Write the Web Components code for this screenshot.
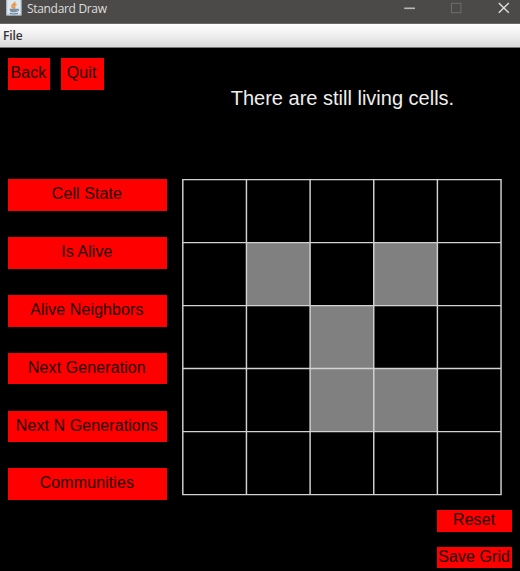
<!DOCTYPE html>
<html lang="en">
<head>
<meta charset="utf-8">
<title>Standard Draw</title>
<style>
html,body{margin:0;height:100%;background:#000;overflow:hidden}
</style>
</head>
<body>
<draw-window></draw-window>
<script>
class BaseElement extends HTMLElement {
  constructor() {
    super();
    this.attachShadow({ mode: 'open' }).innerHTML = this.view();
  }
}

customElements.define('title-bar', class extends BaseElement {
  view() {
    return `<style>
      :host{display:flex;box-sizing:border-box;height:24px;background:#4b4a48;border-bottom:1px solid #6c6b6a;color:#dedede;
        font:12px/17px "Open Sans","Noto Sans",sans-serif;padding-left:6px}
      .name{margin-left:5px;width:370.5px;letter-spacing:-.32px}
      svg{display:block;flex:none}
    </style>
    <svg width="16" height="16" viewBox="0 0 16 16">
      <rect x=".2" width="15.3" height="15.5" fill="#dfe7ee"/>
      <path d="M.7 0v15h14.4V0" fill="none" stroke="#92a7b9" stroke-width=".7"/>
      <path d="M8.7 1.8C9.6 4 5.3 4.6 6.1 6.6c.3.8 1 1.2 1.2 2M10.5 4.2C8.7 5 7.7 5.8 8.4 6.8c.4.5.5 1.1-.1 1.8" fill="none" stroke="#e59a4c" stroke-width="1.8"/>
      <path d="M3.6 8.8h7.6c-.1 1.9-.7 2.9-1.5 3.5H5.3C4.3 11.8 3.7 10.7 3.6 8.8z" fill="#7890a5"/>
      <path d="M11 9.3c2.6-.8 2.3 1.8-.6 2M3.5 13.3c2.5.8 6.2.8 8.5 0" fill="none" stroke="#55758f" stroke-width="1"/>
    </svg>
    <span class="name"><slot></slot></span>
    <svg width="122" height="18" viewBox="398 0 122 18">
      <path d="M404.2 8.3h10.8" stroke="#b8b8b7" stroke-width="1.6"/>
      <rect x="451.5" y="3.3" width="9.4" height="9.4" fill="none" stroke="#6e6d6b"/>
      <path d="M498.8 2.9l10 9.9M508.8 2.9l-10 9.9" stroke="#dededd" stroke-width="1.4"/>
    </svg>`;
  }
});

customElements.define('menu-bar', class extends BaseElement {
  view() {
    return `<style>
      :host{display:block;box-sizing:border-box;height:24px;padding-left:3px;border-bottom:1px solid #777;
        background:linear-gradient(#fff,#f0f0f0 45%,#dadada);color:#333;font:600 12px/23px "Open Sans","Noto Sans",sans-serif;letter-spacing:-.1px}
    </style><slot></slot>`;
  }
});

customElements.define('red-button', class extends BaseElement {
  view() {
    return `<style>
      :host{display:block;box-sizing:border-box;background:#f00;color:#1c0000;text-align:center;white-space:nowrap;
        width:var(--w,159.6px);height:var(--h,31.7px);line-height:var(--lh,29.5px);font-family:"Liberation Sans",Arial,sans-serif;font-size:16px;letter-spacing:.09px}
      span{display:flex;justify-content:center;margin-left:-1.2px}
    </style><span><slot></slot></span>`;
  }
});

customElements.define('life-grid', class extends BaseElement {
  view() {
    const rows = ['.....', '.#.#.', '..#..', '..##.', '.....'];
    const dx = 63.65, dy = 63, x0 = 1, y0 = 1;
    let cells = '', lines = '';
    rows.forEach((row, r) => [...row].forEach((c, i) => {
      if (c === '#') cells += `<rect x="${x0 + i * dx}" y="${y0 + r * dy}" width="${dx}" height="${dy}"/>`;
    }));
    for (let i = 0; i <= 5; i++) {
      lines += `M${x0 + i * dx} ${y0 - .6}V${y0 + 5 * dy + .6}M${x0 - .6} ${y0 + i * dy}H${x0 + 5 * dx + .6}`;
    }
    return `<style>:host{display:block;width:321px;height:317px}svg{display:block}</style>
      <svg width="321" height="317"><g transform="translate(-.2 -.4)"><g fill="#808080">${cells}</g>
      <path d="${lines}" fill="none" stroke="#d2d2d2" stroke-width="1.45"/></g></svg>`;
  }
});

customElements.define('draw-window', class extends BaseElement {
  view() {
    return `<style>
      :host{display:block;width:520px;height:571px;background:#000}
      header{display:flex;gap:10.4px;padding:10.2px 0 0 7.7px;height:121.2px;box-sizing:border-box}
      header red-button{--w:42.8px;--h:31.8px;--lh:30px}
      p{margin:27.5px 0 0 116.7px;color:#eee;font:20px/24px "Liberation Sans",Arial,sans-serif;white-space:nowrap}
      main{display:flex;padding:10px 0 0 7.7px;height:331px;box-sizing:border-box;gap:14.5px}
      nav{display:flex;flex-direction:column;gap:26.15px}
      footer{display:flex;flex-direction:column;align-items:flex-end;gap:15.4px;padding:10.2px 8px 0 0}
      footer red-button{--w:74.6px;--h:21.2px;--lh:19.5px}
    </style>
    <title-bar>Standard Draw</title-bar>
    <menu-bar>File</menu-bar>
    <header><red-button>Back</red-button><red-button>Quit</red-button><p>There are still living cells.</p></header>
    <main>
      <nav><red-button>Cell State</red-button><red-button>Is Alive</red-button><red-button>Alive Neighbors</red-button>
      <red-button>Next Generation</red-button><red-button>Next N Generations</red-button><red-button>Communities</red-button></nav>
      <life-grid></life-grid>
    </main>
    <footer><red-button>Reset</red-button><red-button>Save Grid</red-button></footer>`;
  }
});
</script>
</body>
</html>
